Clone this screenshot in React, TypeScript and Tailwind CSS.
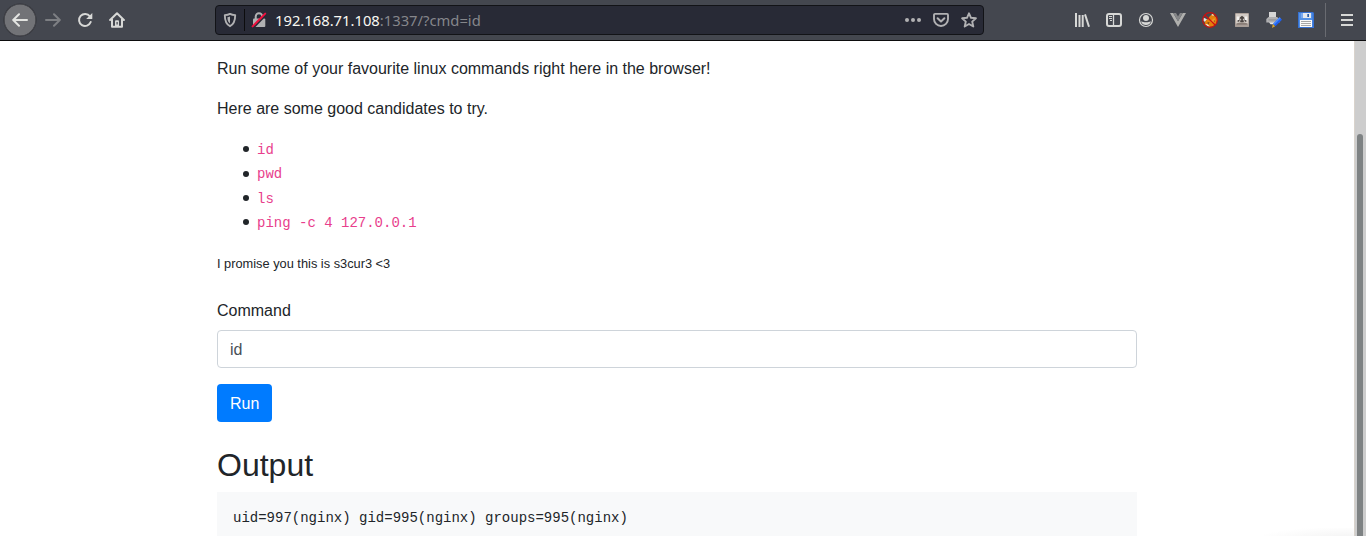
import type { ReactNode } from "react";

function Icon({ children, size = 16 }: { children: ReactNode; size?: number }) {
  return (
    <svg width={size} height={size} viewBox="0 0 16 16" fill="none" className="shrink-0">
      {children}
    </svg>
  );
}

function ToolButton({ label, children, className = "" }: { label: string; children: ReactNode; className?: string }) {
  return (
    <button aria-label={label} className={`flex h-8 w-8 shrink-0 items-center justify-center ${className}`}>
      {children}
    </button>
  );
}

const LIGHT = "#d7d8d6";

function Toolbar() {
  return (
    <header className="flex h-[41px] w-full shrink-0 items-center border-b border-[#0c0c0d] bg-[#44474f] pl-1">
      <ToolButton label="Back" className="rounded-full bg-[#727377] shadow-[0_0_0_0.6px_#34353b,inset_0_0_0_0.6px_#34353b]">
        <Icon>
          <path d="M15 8H1.5M7 2.2 1.2 8 7 13.8" stroke="#e3e4e1" strokeWidth="2" strokeLinecap="round" strokeLinejoin="round" />
        </Icon>
      </ToolButton>
      <ToolButton label="Forward" className="ml-px">
        <Icon>
          <path d="M1 8h13.5M9 2.2 14.8 8 9 13.8" stroke="#7d7f83" strokeWidth="2" strokeLinecap="round" strokeLinejoin="round" />
        </Icon>
      </ToolButton>
      <ToolButton label="Reload">
        <Icon>
          <path d="M12.9 4.4A6 6 0 1 0 13.7 10" stroke={LIGHT} strokeWidth="2" strokeLinecap="round" />
          <path d="M15.3 1v5.6a.5.5 0 0 1-.5.5H9.2z" fill={LIGHT} />
        </Icon>
      </ToolButton>
      <ToolButton label="Home">
        <Icon>
          <path d="M1.1 8 8 1.300 14.900 8M3 7.200v7.600h10V7.200" stroke={LIGHT} strokeWidth="2" strokeLinecap="round" strokeLinejoin="round" />
          <path d="M6 9.200a1 1 0 0 1 1-1h2a1 1 0 0 1 1 1V14H6z" fill={LIGHT} />
          <rect x="7.500" y="10" width="1.200" height="2.500" fill="#44474f" />
        </Icon>
      </ToolButton>

      <div className="ml-[82px] flex h-[30px] w-[769px] shrink-0 items-center rounded-[4px] border border-[#121317] bg-[#282a36]">
        <div className="flex w-7 justify-center">
          <Icon>
            <path d="M8 1.900c1.600.8 3.300 1.100 5.200 1.200 0 5-.7 9-5.200 11.100C3.500 12.100 2.800 8.100 2.800 3.100 4.700 3 6.400 2.700 8 1.900z" stroke="#b1b1b3" strokeWidth="1.900" strokeLinejoin="round" />
            <path d="M8 4.600v7c-2-1.400-2.500-3.500-2.600-6.300C6.300 5.200 7.100 5 8 4.600z" fill="#b1b1b3" />
          </Icon>
        </div>
        <div className="h-[22px] w-px bg-[#0c0c0d]" />
        <div className="flex w-7 justify-center">
          <Icon>
            <path d="M4.700 7V4.500a3.300 3.300 0 0 1 6.600 0V7" stroke="#b1b1b3" strokeWidth="2" />
            <rect x="2" y="6.500" width="12.300" height="8.500" rx="1" fill="#b1b1b3" />
            <path d="M1.500 16.300 15 2.300" stroke="#282a36" strokeWidth="2.500" />
            <path d="M1.600 14.400 14.200 1.600" stroke="#f0103e" strokeWidth="2" strokeLinecap="round" />
          </Icon>
        </div>
        <div className="ml-[2px] whitespace-pre font-['Noto_Sans',sans-serif] text-[14.780px] leading-7 text-[#f8f8f2]">
          192.168.71.108<span className="text-[#85868b]">:1337/?cmd=id</span>
        </div>
        <div className="ml-auto flex items-center">
          <div className="flex w-7 justify-center">
            <Icon>
              <circle cx="2" cy="8" r="2" fill="#b1b1b3" />
              <circle cx="8" cy="8" r="2" fill="#b1b1b3" />
              <circle cx="14" cy="8" r="2" fill="#b1b1b3" />
            </Icon>
          </div>
          <div className="flex w-7 justify-center">
            <Icon>
              <path d="M2 1.900h12a1 1 0 0 1 1 1v4.100a7 7 0 0 1-14 0V2.900a1 1 0 0 1 1-1z" stroke="#b1b1b3" strokeWidth="1.900" />
              <path d="m4.600 6.200 3.400 3.300 3.400-3.300" stroke="#b1b1b3" strokeWidth="2" strokeLinecap="round" strokeLinejoin="round" />
            </Icon>
          </div>
          <div className="flex w-7 justify-center">
            <Icon>
              <path d="m8 1.300 2 4.500 4.900.5-3.700 3.300 1.100 4.900L8 12l-4.300 2.500 1.100-4.900L1.100 6.300 6 5.800z" stroke="#b1b1b3" strokeWidth="1.900" strokeLinejoin="round" />
            </Icon>
          </div>
        </div>
      </div>

      <div className="ml-[82px] flex items-center">
        <ToolButton label="Library">
          <Icon>
            <path d="M2 1v14M5.500 3v12M8.700 3v12" stroke={LIGHT} strokeWidth="2" />
            <path d="m11 2.400 4 12.400" stroke={LIGHT} strokeWidth="2" />
          </Icon>
        </ToolButton>
        <ToolButton label="Sidebars">
          <Icon>
            <rect x="1" y="2" width="14" height="12" rx="2" stroke={LIGHT} strokeWidth="2" />
            <path d="M7.500 2v12" stroke={LIGHT} strokeWidth="1.300" />
            <path d="M3 4.500h3M3 6.500h3M4 8.500h2" stroke={LIGHT} strokeWidth="1" />
          </Icon>
        </ToolButton>
        <ToolButton label="Account">
          <Icon>
            <circle cx="8" cy="8" r="6.500" stroke={LIGHT} strokeWidth="1.200" />
            <circle cx="8" cy="6" r="3" fill={LIGHT} />
            <path d="M3 9.500c1.500-.2 2.500.8 5 .8s3.500-1 5-.8c-.8 2.400-2.700 3.600-5 3.600s-4.200-1.200-5-3.600z" fill={LIGHT} />
          </Icon>
        </ToolButton>
        <ToolButton label="Vue">
          <Icon>
            <path d="M0 1h3.200L8 9.300 12.800 1H16L8 15z" fill="#b0b0ae" />
            <path d="M3.200 1H6l2 3.400L10 1h2.800L8 9.300z" fill="#858688" />
          </Icon>
        </ToolButton>
        <ToolButton label="Proxy">
          <Icon>
            <path d="M1.200 5.500 5 7.300 3.300 10 1.500 9z" fill="#e9e4dc" />
            <path d="M2.500 11c1-2 1.500-3 3.500-4.200L7.500 4.500 11 1.500l1.700 2.700L15 6c.7 4-1 7.800-5.500 8.700-3 .4-5.800-1-7-3.700z" fill="#e4810c" />
            <path d="M8 9.500 12.500 6l.8 3-2.800 2.500z" fill="#f0992b" />
            <path d="m5 10.800 2.500-.8-1 2.300z" fill="#70401c" />
            <path d="m11.500 9 1.500-.7-.5 1.800z" fill="#70401c" />
            <path d="m9.200 2.900 2-1.200.5 2.300z" fill="#efe5d5" />
            <path d="m3 12 2.500.2L8 14.500H6z" fill="#efe5d5" />
            <circle cx="8" cy="8" r="7.300" stroke="#cc1010" strokeWidth="1.200" />
            <path d="m2.900 3 10.200 10" stroke="#cc1010" strokeWidth="1.200" />
          </Icon>
        </ToolButton>
        <ToolButton label="Tampering">
          <Icon size={14}>
            <rect x="0" y="0" width="16" height="16" rx="1" fill="#a89d96" />
            <rect x="1" y="1" width="14" height="11" fill="#d2cbc5" />
            <path d="M2 4h3v5H2zM11 4h3v5h-3z" fill="#f4f2f0" />
            <path d="M5.500 5 8 3l2.500 2 .5 4-2 1.500H7L5 9z" fill="#4a4441" />
            <path d="M5.800 6.500h1.300v2H5.800zM9 6.500h1.300v2H9z" fill="#c9c3be" />
            <path d="M3 8h1.500v2H3zM11.500 8H13v2h-1.500z" fill="#4a4441" />
            <path d="M2 12c3-1.500 9-1.500 12 0v1.500H2z" fill="#897d76" />
          </Icon>
        </ToolButton>
        <ToolButton label="Print edit">
          <Icon>
            <rect x="3" y="0" width="7" height="6.500" fill="#d6d6d6" />
            <path d="M.3 7 2.500 5h8.500l2.500 2v3.500H.3z" fill="#b0b0b2" />
            <path d="M2.500 7.300h8v1.200h-8z" fill="#929295" />
            <path d="m3 10.300 1.500 2h6v-2z" fill="#e5e5e5" />
            <path d="m13.600 5.200 2.400 2.500-6.500 6.500L7 12z" fill="#1e60f0" />
            <path d="m13.600 5.200 1.100 1.100-6.500 6.500L7 12z" fill="#4b8dff" />
            <path d="M6.800 12 9.200 14.200 6 15.900z" fill="#d9a52c" />
          </Icon>
        </ToolButton>
        <ToolButton label="Save">
          <Icon>
            <path d="M0 0h15L16 1v15H0z" fill="#3571d3" />
            <path d="M1 1h13.500v14H1z" fill="#5591e4" />
            <path d="M3 1h10v5H3z" fill="#79aaf0" />
            <path d="M5 1h8v5H5z" fill="#e5e9ee" />
            <path d="M9.300 2h1.700v3H9.300z" fill="#285ca9" />
            <path d="M2 8h12v7H2z" fill="#fafafa" />
            <path d="M3 9.500h10M3 11.500h10M3 13.500h10" stroke="#a7a7a7" />
          </Icon>
        </ToolButton>
      </div>
      <div className="ml-[3px] h-[34px] w-px shrink-0 bg-[#696b71]" />
      <ToolButton label="Menu" className="ml-[5px]">
        <Icon>
          <path d="M2 3h12M2 8h12M2 13h12" stroke={LIGHT} strokeWidth="2" />
        </Icon>
      </ToolButton>
    </header>
  );
}

const commands = ["id", "pwd", "ls", "ping -c 4 127.0.0.1"];

function CommandPage() {
  return (
    <main className="w-[920px] font-['Liberation_Sans',sans-serif] text-base leading-6 text-[#212529]">
      <p className="mt-4">Run some of your favourite linux commands right here in the browser!</p>
      <p className="mt-4">Here are some good candidates to try.</p>
      <ul className="mt-4 pl-[26px]">
        {commands.map((command) => (
          <li key={command} className="flex h-[24.4px] items-center gap-2">
            <span className="h-1.5 w-1.5 rounded-full bg-[#212529]" />
            <code className="mt-[1.2px] font-['Liberation_Mono',monospace] text-sm leading-6 text-[#e83e8c]">{command}</code>
          </li>
        ))}
      </ul>
      <p className="mt-4">
        <small className="text-[12.8px]">I promise you this is s3cur3 &lt;3</small>
      </p>
      <form className="mt-[23.4px]" onSubmit={(event) => event.preventDefault()}>
        <label htmlFor="command" className="mb-[7px] block">Command</label>
        <input
          id="command"
          defaultValue="id"
          className="block h-[38px] w-full rounded border border-[#ced4da] bg-white px-3 pt-[7px] pb-[5px] text-[#495057] outline-none"
        />
        <button type="submit" className="mt-4 block h-[38px] rounded bg-[#007bff] px-[13px] pt-0.5 text-white">
          Run
        </button>
      </form>
      <h2 className="mt-[23.6px] text-[32px] leading-[38.4px]">Output</h2>
      <pre className="mt-2 bg-[#f8f9fa] p-4 font-['Liberation_Mono',monospace] text-sm leading-[21px]">
        uid=997(nginx) gid=995(nginx) groups=995(nginx)
      </pre>
    </main>
  );
}

export default function App() {
  return (
    <div className="flex h-[536px] w-[1366px] flex-col overflow-hidden bg-white">
      <Toolbar />
      <div className="flex min-h-0 flex-1">
        <div className="flex min-w-0 flex-1 items-end overflow-hidden pl-[217px]">
          <div className="h-full">
            <CommandPage />
          </div>
          <div className="ml-auto h-2 w-[90px] bg-radial-[at_100%_150%] from-[#f1f1f1] to-white to-80%" />
        </div>
        <div className="flex w-3 shrink-0 border-l border-[#d9d3cc] bg-[#cdcdcd] pl-0.5 pt-[93px]">
          <div className="w-1.5 rounded-t-full bg-[#7e8283]" />
        </div>
      </div>
    </div>
  );
}
